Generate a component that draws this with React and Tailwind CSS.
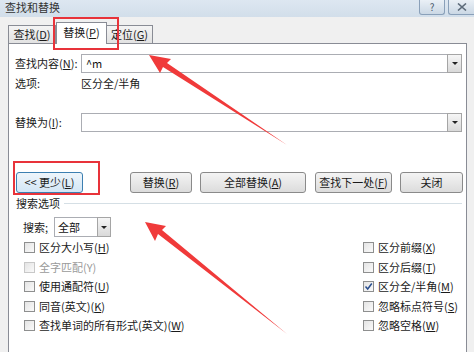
import React from "react";

const font = { fontFamily: '"Noto Sans CJK SC", "Microsoft YaHei", sans-serif' };

const Key = ({ k }) => (
    <>
        (<span className="underline underline-offset-1">{k}</span>)
    </>
);

const DropBtn = ({ className = "" }) => (
    <div
        className={
            "flex items-center justify-center border border-[#a5a5a5] bg-gradient-to-b from-[#f6f6f6] to-[#d9d9d9] " +
            className
        }
    >
        <div className="w-0 h-0 border-l-[3px] border-r-[3px] border-t-[3px] border-l-transparent border-r-transparent border-t-[#222]" />
    </div>
);

const Combo = ({ value }) => (
    <div className="flex h-[19px] w-[381px] border border-[#abadb3] bg-white">
        <div className="flex-1 pl-[4px] leading-[17px] text-[#111]">{value}</div>
        <DropBtn className="w-[15px] -my-px -mr-px" />
    </div>
);

const Button = ({ children, width, focused }) => (
    <div
        className={
            "flex h-[21px] items-center justify-center rounded-[3px] border text-[#1a1a1a] " +
            (focused
                ? "border-[#3c7fb1] bg-gradient-to-b from-[#eef5fb] to-[#d3e6f5] "
                : "border-[#8a8a8a] bg-gradient-to-b from-[#f4f4f4] to-[#dcdcdc] ") +
            width
        }
    >
        {children}
    </div>
);

const Check = ({ label, checked, disabled }) => (
    <div className="flex h-[19.5px] items-center">
        <div
            className={
                "flex h-[11px] w-[11px] items-center justify-center border bg-gradient-to-br from-[#e4e4e4] to-[#fafafa] " +
                (disabled ? "border-[#c8c8c8]" : "border-[#8e8f8f]")
            }
        >
            {checked && (
                <svg width="9" height="9" viewBox="0 0 9 9">
                    <path d="M1.5 4.5 L3.7 7 L7.8 1.5" fill="none" stroke="#2a4f8f" strokeWidth="1.5" />
                </svg>
            )}
        </div>
        <span className={"ml-[4px] " + (disabled ? "text-[#9a9a9a]" : "text-[#1a1a1a]")}>{label}</span>
    </div>
);

export default function App() {
    return (
        <div
            className="relative h-[352px] w-[474px] overflow-hidden bg-[#f0f0f0] text-[11px] leading-none"
            style={font}
        >
            {/* title bar */}
            <div className="flex h-[17px] items-start bg-gradient-to-b from-[#dde7f1] to-[#d2deea]">
                <div className="pl-[5px] pt-[2px] text-[11px] text-[#333]">查找和替换</div>
                <div className="ml-auto flex gap-[3px]">
                    <div className="flex h-[15px] w-[26px] items-center justify-center rounded-b-[3px] border border-t-0 border-[#8aa0b9] bg-gradient-to-b from-[#eaf0f6] to-[#cbd8e5] text-[10px] text-[#4a5a6c]">
                        ?
                    </div>
                    <div className="flex h-[15px] w-[26px] items-center justify-center rounded-bl-[3px] border border-t-0 border-r-0 border-[#8aa0b9] bg-gradient-to-b from-[#eaf0f6] to-[#cbd8e5]">
                        <svg width="10" height="8" viewBox="0 0 10 8">
                            <path d="M1 0.5 L9 7.5 M9 0.5 L1 7.5" stroke="#5d6b7a" strokeWidth="1.6" />
                        </svg>
                    </div>
                </div>
            </div>

            {/* tabs */}
            <div className="flex h-[26px] items-end pl-[8px]">
                <div className="flex h-[18px] w-[48px] items-center justify-center border border-b-0 border-[#898c95] bg-gradient-to-b from-[#f4f4f4] to-[#e2e2e2] text-[#1a1a1a]">
                    查找<Key k="D" />
                </div>
                <div className="relative z-10 -mb-px flex h-[22px] w-[51px] items-center justify-center border border-b-0 border-[#898c95] bg-white pb-[2px] text-[#1a1a1a]">
                    替换<Key k="P" />
                </div>
                <div className="flex h-[18px] w-[46px] items-center justify-center border border-b-0 border-l-0 border-[#898c95] bg-gradient-to-b from-[#f4f4f4] to-[#e2e2e2] text-[#1a1a1a]">
                    定位<Key k="G" />
                </div>
            </div>

            {/* panel */}
            <div className="ml-[8px] h-[320px] w-[459px] border border-[#898c95] bg-white">
                <div className="mt-[10px] flex items-center">
                    <div className="w-[72px] pl-[6px] text-[#1a1a1a]">
                        查找内容(<span className="underline underline-offset-1">N</span>):
                    </div>
                    <Combo value="^m" />
                </div>
                <div className="flex h-[20px] items-center">
                    <div className="w-[72px] pl-[6px] text-[#1a1a1a]">选项:</div>
                    <div className="text-[#1a1a1a]">区分全/半角</div>
                </div>
                <div className="mt-[20px] flex items-center">
                    <div className="w-[72px] pl-[6px] text-[#1a1a1a]">
                        替换为(<span className="underline underline-offset-1">I</span>):
                    </div>
                    <Combo value="" />
                </div>

                {/* buttons */}
                <div className="mt-[40px] flex items-center pl-[7px]">
                    <Button width="w-[67px]" focused>
                        &lt;&lt; 更少<Key k="L" />
                    </Button>
                    <div className="ml-[47px]">
                        <Button width="w-[62px]">
                            替换<Key k="R" />
                        </Button>
                    </div>
                    <div className="ml-[8px]">
                        <Button width="w-[106px]">
                            全部替换<Key k="A" />
                        </Button>
                    </div>
                    <div className="ml-[9px]">
                        <Button width="w-[77px]">
                            查找下一处<Key k="F" />
                        </Button>
                    </div>
                    <div className="ml-[8px]">
                        <Button width="w-[63px]">关闭</Button>
                    </div>
                </div>

                {/* search options */}
                <div className="flex h-[20px] items-center pl-[7px] pr-[4px]">
                    <span className="text-[#1a1a1a]">搜索选项</span>
                    <div className="ml-[4px] h-px flex-1 bg-[#d5dfe5]" />
                </div>
                <div className="mt-[4px] flex items-center pl-[14px]">
                    <span className="w-[31px] text-[#1a1a1a]">
                        搜索<span className="underline underline-offset-1">;</span>
                    </span>
                    <div className="flex h-[20px] w-[57px] border border-[#abadb3] bg-white">
                        <div className="flex-1 pl-[3px] leading-[18px] text-[#111]">全部</div>
                        <DropBtn className="w-[14px] -my-px -mr-px" />
                    </div>
                </div>
                <div className="mt-px flex pl-[15px]">
                    <div className="flex w-[339px] flex-col">
                        <Check label={<>区分大小写<Key k="H" /></>} />
                        <Check label="全字匹配(Y)" disabled />
                        <Check label={<>使用通配符<Key k="U" /></>} />
                        <Check label={<>同音(英文)<Key k="K" /></>} />
                        <Check label={<>查找单词的所有形式(英文)<Key k="W" /></>} />
                    </div>
                    <div className="flex flex-col">
                        <Check label={<>区分前缀<Key k="X" /></>} />
                        <Check label={<>区分后缀<Key k="T" /></>} />
                        <Check label={<>区分全/半角<Key k="M" /></>} checked />
                        <Check label={<>忽略标点符号<Key k="S" /></>} />
                        <Check label={<>忽略空格<Key k="W" /></>} />
                    </div>
                </div>
            </div>

            {/* annotations */}
            <div className="absolute left-[53px] top-[17px] h-[33px] w-[66px] border-2 border-[#e8333a]" />
            <div className="absolute left-[13px] top-[161px] h-[34px] w-[87px] border-2 border-[#e8333a]" />
            <svg className="pointer-events-none absolute left-0 top-0" width="474" height="352">
                <polygon points="149,55 171,59 167,63 287,145 163,67 160,73" fill="#f03a3a" />
                <polygon points="145,222 166,226 162,230 287,334 158,234 155,241" fill="#f03a3a" />
            </svg>
        </div>
    );
}
